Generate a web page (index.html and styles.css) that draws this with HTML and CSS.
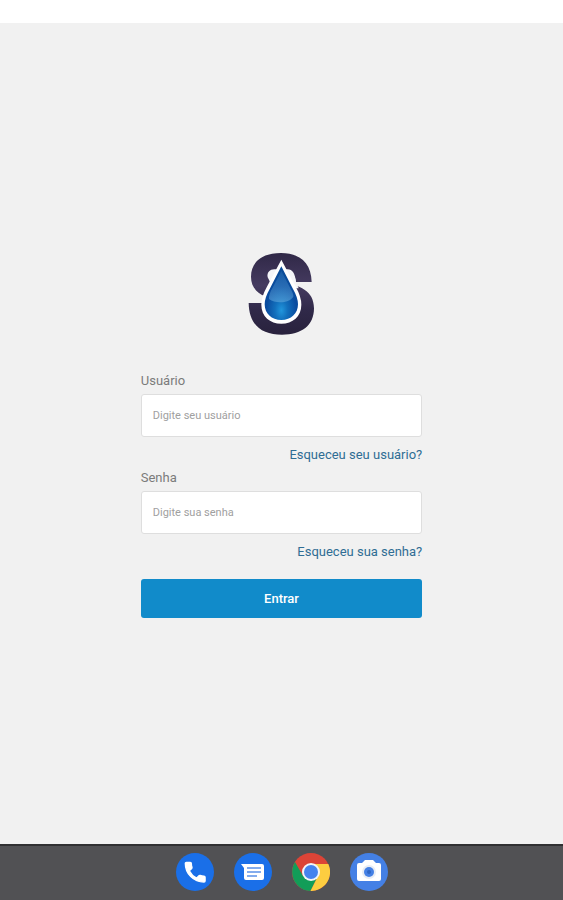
FILE: index.html
```html
<!DOCTYPE html>
<html lang="pt-BR">
<head>
<meta charset="utf-8">
<meta name="viewport" content="width=device-width, initial-scale=1">
<title>Entrar</title>
<link rel="stylesheet" href="styles.css">
</head>
<body>
<div class="status-bar"></div>
<main class="screen">
  <form class="login">
    <svg class="logo" viewBox="32 27 210 252" role="img" aria-label="Logo">
      <defs>
        <linearGradient id="letter" x1="0" y1="0" x2="0" y2="1">
          <stop offset="0" stop-color="#302847"/>
          <stop offset=".4" stop-color="#453b60"/>
          <stop offset=".7" stop-color="#302949"/>
          <stop offset="1" stop-color="#29223d"/>
        </linearGradient>
        <radialGradient id="water" cx=".5" cy=".82" r=".75">
          <stop offset="0" stop-color="#2196dc"/>
          <stop offset=".25" stop-color="#1270bd"/>
          <stop offset=".6" stop-color="#0a4c9f"/>
          <stop offset="1" stop-color="#0b4c98"/>
        </radialGradient>
        <linearGradient id="shine" x1="0" y1="0" x2="0" y2="1">
          <stop offset="0" stop-color="#3b83c4" stop-opacity=".3"/>
          <stop offset="1" stop-color="#69aee0" stop-opacity=".55"/>
        </linearGradient>
      </defs>
      <path fill="url(#letter)" d="M226 117H179C177 94 160 82 136 82C114 82 96 88 96 99C96 108 111 112 135 117C190 127 233 142 233 196C233 248 196 275 137 275C76 275 38 246 37 180H80C85 210 105 228 135 228V174C84 164 44 148 44 101C44 55 80 30 134 30C190 30 225 59 226 117Z"/>
      <path fill="#f4f5f8" d="M94 103C91 88 101 79 114 79H154C168 80 176 90 179 117L187 136L150 135H110Z"/>
      <path fill="#fff" d="M135 50L179 133Q195 162 195 185C195 220 169 242 135 242C101 242 75 220 75 185Q75 162 91 133Z"/>
      <path fill="url(#water)" d="M135 70L170 138Q185 164 185 184C185 212 164 231 135 231C106 231 85 212 85 184Q85 164 100 138Z"/>
      <path fill="url(#shine)" d="M135 84L162 136Q172 153 171 161C158 181 118 183 98 168Q97 154 108 136Z"/>
    </svg>
    <label class="label" for="user">Usuário</label>
    <input class="field" id="user" type="text" placeholder="Digite seu usuário">
    <a class="forgot" href="#user">Esqueceu seu usuário?</a>
    <label class="label" for="password">Senha</label>
    <input class="field" id="password" type="password" placeholder="Digite sua senha">
    <a class="forgot" href="#password">Esqueceu sua senha?</a>
    <button class="submit" type="submit">Entrar</button>
  </form>
</main>
<nav class="dock" aria-label="Aplicativos">
  <a class="app" href="#phone" aria-label="Telefone">
    <svg viewBox="0 0 38 38"><circle cx="19" cy="19" r="19" fill="#1a6fe8"/><path transform="translate(6 6) scale(1.1)" fill="#fff" stroke="#fff" stroke-width="1.2" stroke-linejoin="round" d="M6.62 10.79c1.44 2.83 3.76 5.14 6.59 6.59l2.2-2.2c.27-.27.67-.36 1.02-.24 1.12.37 2.33.57 3.57.57.55 0 1 .45 1 1V20c0 .55-.45 1-1 1C10.61 21 3 13.39 3 4c0-.55.45-1 1-1h3.5c.55 0 1 .45 1 1 0 1.25.2 2.45.57 3.57.11.35.03.74-.25 1.02l-2.2 2.2z"/></svg>
  </a>
  <a class="app" href="#messages" aria-label="Mensagens">
    <svg viewBox="0 0 38 38"><circle cx="19" cy="19" r="19" fill="#1a6fe8"/><path fill="#fff" d="M7 11H28Q30 11 30 13V25Q30 27 28 27H12Q10 27 10 25V15Z"/><path fill="none" stroke="#5b91e8" stroke-width="1.5" d="M13 15H27M13 19H27M13 23H23"/></svg>
  </a>
  <a class="app" href="#chrome" aria-label="Chrome">
    <svg viewBox="0 0 38 38"><circle cx="19" cy="19" r="19" fill="#dc4437"/><path fill="#129d58" d="M3 9A19 19 0 0 0 18.5 38L26 23L19 19L11 23Z"/><path fill="#fdcd40" d="M19 11H36.3A19 19 0 0 1 18.5 38L26 23Z"/><circle cx="19" cy="19" r="9" fill="#f3f5f8"/><circle cx="19" cy="19" r="7" fill="#4583ee"/></svg>
  </a>
  <a class="app" href="#camera" aria-label="Câmera">
    <svg viewBox="0 0 38 38"><circle cx="19" cy="19" r="19" fill="#4480e5"/><path fill="#fff" d="M9 10H12L15 7H23L26 10H29Q31 10 31 12V26Q31 28 29 28H9Q7 28 7 26V12Q7 10 9 10Z"/><circle cx="19" cy="19" r="7" fill="#e8edf5"/><circle cx="19" cy="19" r="5" fill="#4480e5"/><circle cx="19" cy="19" r="2" fill="#2d65c5"/></svg>
  </a>
</nav>
</body>
</html>
```
FILE: styles.css
```css
* {
  box-sizing: border-box;
}

body {
  margin: 0;
  min-height: 100vh;
  display: flex;
  flex-direction: column;
  background: #f1f1f1;
  font-family: Roboto, "Liberation Sans", sans-serif;
  font-size: 13px;
  line-height: 20px;
}

.status-bar {
  height: 23px;
  background: #fff;
}

.screen {
  flex: 1;
  display: flex;
  align-items: center;
  justify-content: center;
  padding-top: 3px;
}

.login {
  width: 50%;
  display: flex;
  flex-direction: column;
}

.logo {
  width: 70px;
  height: 84px;
  margin-bottom: 32px;
  align-self: center;
}

.label {
  margin-top: 3px;
  margin-bottom: 3px;
  color: #7b7b7b;
}

.field {
  width: 100%;
  height: 43px;
  padding: 0 11px;
  border: 1px solid #dedede;
  border-radius: 3px;
  background: #fff;
  color: #444;
  font: inherit;
  font-size: 11px;
}

.field::placeholder {
  color: #a0a0a0;
  opacity: 1;
}

.forgot {
  margin-top: 8px;
  align-self: flex-end;
  color: #2f6d94;
  text-decoration: none;
}

.submit {
  height: 39px;
  margin-top: 17px;
  padding: 0;
  border: 0;
  border-radius: 3px;
  background: #118bca;
  color: #fff;
  font: inherit;
  font-weight: 500;
}

.dock {
  height: 56px;
  padding-bottom: 2px;
  display: flex;
  align-items: center;
  justify-content: center;
  gap: 20px;
  border-top: 2px solid #303032;
  background: #515154;
}

.app,
.app svg {
  display: block;
  width: 38px;
  height: 38px;
}
```
